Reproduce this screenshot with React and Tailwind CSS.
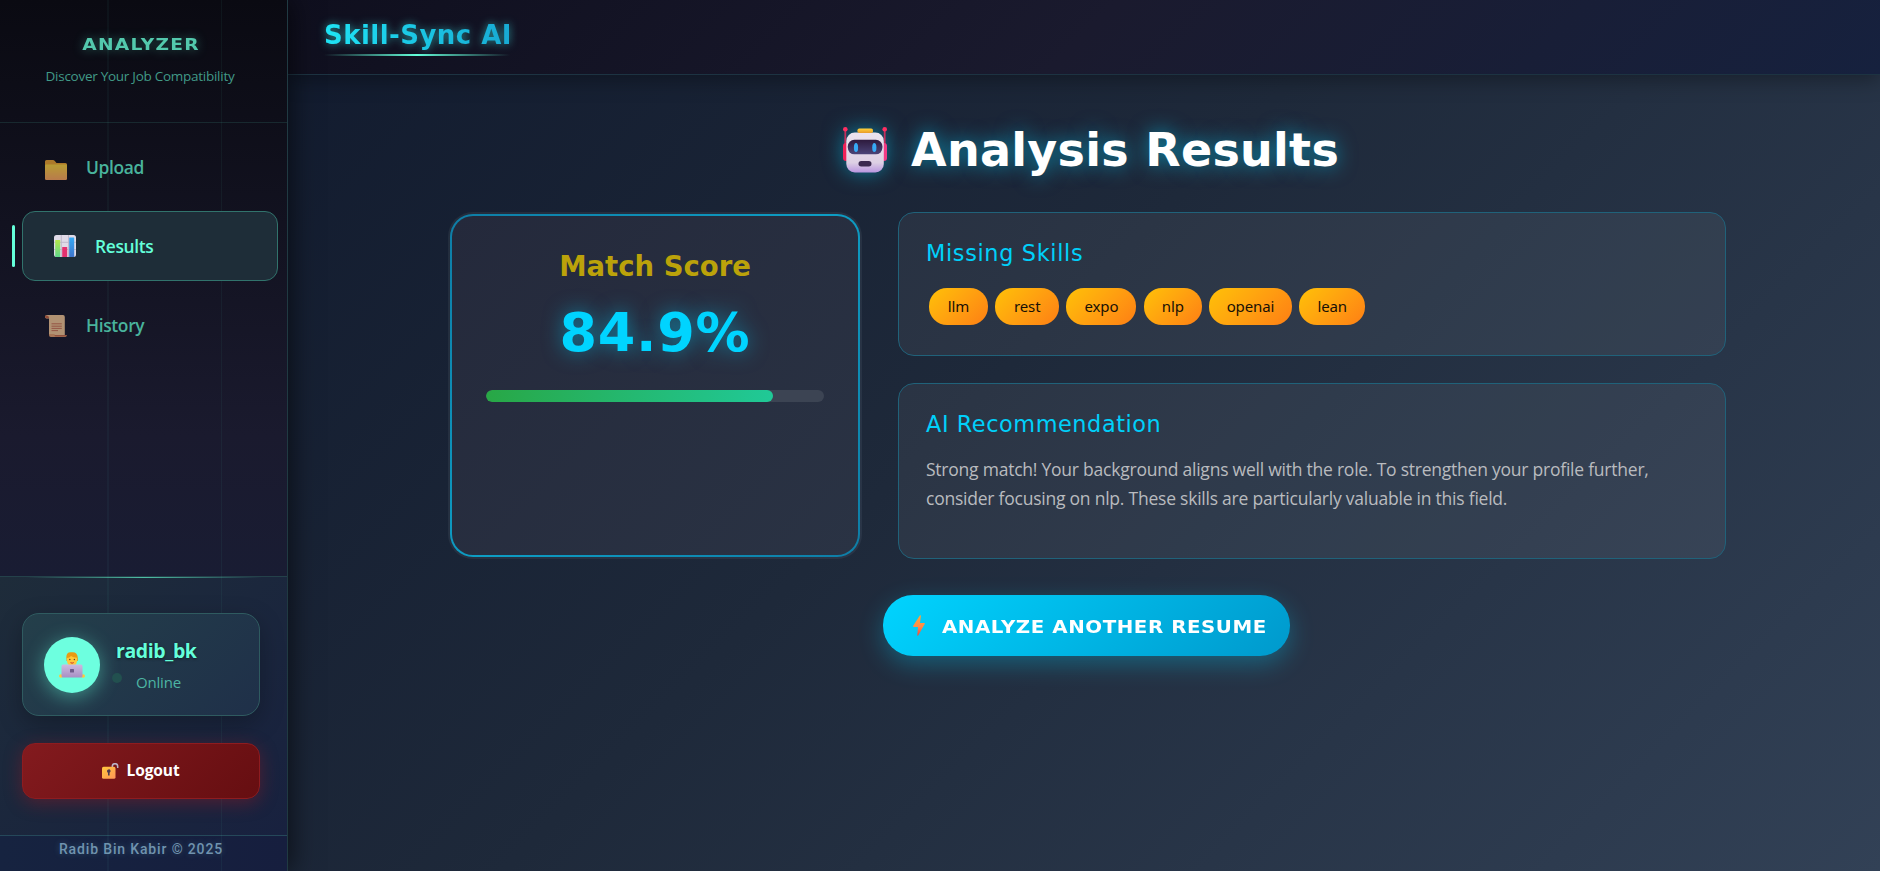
const Folder = () => (
  <svg viewBox="0 0 22 20" className="h-5 w-[22px] shrink-0 opacity-70">
    <defs>
      <linearGradient id="fold" x1="0" y1="0" x2="0" y2="1">
        <stop offset="0" stopColor="#ffd83e" />
        <stop offset="1" stopColor="#ffa860" />
      </linearGradient>
    </defs>
    <path d="M0 1.500Q0 0 1.500 0H8q1 0 1.600.8L11.500 3H20.500Q22 3 22 4.500V10H0z" fill="#f0a630" />
    <rect y="4.500" width="22" height="15.500" rx="1.200" fill="url(#fold)" />
  </svg>
);

const Chart = () => (
  <svg viewBox="0 0 22 22" className="size-[22px] shrink-0">
    <defs>
      <linearGradient id="barA" x1="0" y1="0" x2="0" y2="1">
        <stop offset="0" stopColor="#b4e84a" />
        <stop offset="1" stopColor="#5fd78a" />
      </linearGradient>
      <linearGradient id="barB" x1="0" y1="0" x2="0" y2="1">
        <stop offset="0" stopColor="#35a9f5" />
        <stop offset="1" stopColor="#3f75cc" />
      </linearGradient>
    </defs>
    <rect width="22" height="22" rx="2.500" fill="#e0dbe8" />
    <path d="M7.300 0v22M14.500 0v22M0 7.300h22M0 14.500h22" stroke="#bdb5ca" strokeWidth=".9" />
    <rect x="1.200" y="5" width="5" height="17" rx=".5" fill="url(#barA)" />
    <rect x="8.200" y="12" width="5" height="10" rx=".5" fill="#e5316f" />
    <rect x="15.200" y="2.500" width="5" height="19.500" rx=".5" fill="url(#barB)" />
  </svg>
);

const Scroll = () => (
  <svg viewBox="0 0 22 22" className="size-[22px] shrink-0 opacity-70">
    <path d="M0 1.800Q0 0 2 0H18q1.800 0 1.800 2v18H4V3.500H1.500Q0 3.500 0 1.800z" fill="#f3c794" />
    <path d="M0 1.800Q0 .6 1.500.6q2.500 0 2.500 2.600H1.300Q0 3.200 0 1.800z" fill="#c9633f" />
    <path d="M4 19h5.500q0 1.200 1 1.200H22Q21.500 22 20 22H5.800Q4 22 4 20z" fill="#e8a06c" />
    <path d="M9.500 20h12.300q-.4 1.500-1.800 1.500H10.500q-1-.3-1-1.500z" fill="#c56a48" />
    <path d="M6.500 8.800h10.300M6.500 11.200h10.300M6.500 13.400h10.300M6.500 15.600h6.500" stroke="#c5654a" strokeWidth=".9" />
  </svg>
);

const Technologist = () => (
  <svg viewBox="0 0 26 26" className="size-[26px]">
    <defs>
      <linearGradient id="lap" x1="0" y1="0" x2="0" y2="1">
        <stop offset="0" stopColor="#cdbbe0" />
        <stop offset="1" stopColor="#a88ec4" />
      </linearGradient>
    </defs>
    <path d="M7.500 7Q6.500 0 12 .3 18.500-.8 18.800 6v3H7.500z" fill="#e99a12" />
    <path d="M8 6q2.500 0 4-2 2 1.800 6 1.800V9q-.3 5-5 5t-5-5z" fill="#ffc83a" />
    <circle cx="10.800" cy="7.400" r=".75" fill="#59402f" />
    <circle cx="15.400" cy="7.400" r=".75" fill="#59402f" />
    <path d="M11.500 10.600q1.600 1.200 3.200 0" stroke="#c8322f" strokeWidth="1" fill="none" />
    <ellipse cx="2" cy="24" rx="2" ry="1.700" fill="#ffc83a" />
    <ellipse cx="24" cy="24" rx="2" ry="1.700" fill="#ffc83a" />
    <rect x="2.500" y="12.500" width="21" height="13" rx="1.500" fill="url(#lap)" />
    <rect x="11" y="17" width="4" height="3.500" rx=".6" fill="#6f5b8b" />
  </svg>
);

const OpenLock = () => (
  <svg viewBox="0 0 17 16" className="h-4 w-[17px]">
    <defs>
      <linearGradient id="lock" x1="0" y1="0" x2="1" y2="1">
        <stop offset="0" stopColor="#ffc83d" />
        <stop offset="1" stopColor="#ff9558" />
      </linearGradient>
    </defs>
    <path d="M10.300 5V3.400a2.700 2.700 0 0 1 5.400 0V5" fill="none" stroke="#b9b3c8" strokeWidth="1.500" />
    <rect y="3.800" width="13.500" height="12" rx="1.600" fill="url(#lock)" />
    <path d="M5 8.300a1.800 1.800 0 1 1 2.600 1.500V12.500H6V9.800A1.800 1.800 0 0 1 5 8.300z" fill="#4c3a50" />
  </svg>
);

const Robot = () => (
  <svg
    viewBox="0 0 44 46"
    className="h-[46px] w-11 shrink-0 overflow-visible drop-shadow-[0_0_10px_rgba(0,212,255,0.5)]"
  >
    <defs>
      <linearGradient id="head" x1="0" y1="0" x2="0" y2="1">
        <stop offset="0" stopColor="#ece4ef" />
        <stop offset=".75" stopColor="#ddd0e4" />
        <stop offset="1" stopColor="#b995e0" />
      </linearGradient>
      <linearGradient id="visor" x1="0" y1="0" x2="0" y2="1">
        <stop offset="0" stopColor="#2d1a3d" />
        <stop offset="1" stopColor="#4b4478" />
      </linearGradient>
      <linearGradient id="hat" x1="0" y1="0" x2="0" y2="1">
        <stop offset="0" stopColor="#ffd23a" />
        <stop offset="1" stopColor="#e89a2a" />
      </linearGradient>
    </defs>
    <path d="M2.300 2v18M41.700 2v18" stroke="#c52d5c" strokeWidth="1.800" />
    <circle cx="2.300" cy="2.300" r="2.300" fill="#ff2f62" />
    <circle cx="41.700" cy="2.300" r="2.300" fill="#ff2f62" />
    <rect x="0" y="16" width="7" height="18" rx="3" fill="#ef2158" />
    <rect x="37" y="16" width="7" height="18" rx="3" fill="#f23b86" />
    <rect x="3.300" y="5.600" width="37.500" height="40" rx="8.500" fill="url(#head)" />
    <rect x="14.500" y="1.500" width="15.500" height="4.600" rx="1.800" fill="url(#hat)" />
    <rect x="4.800" y="12.800" width="34.600" height="14.500" rx="6.500" fill="url(#visor)" />
    <ellipse cx="13" cy="20.500" rx="2.100" ry="4.600" fill="#36a9f4" />
    <ellipse cx="31.300" cy="20.500" rx="2.100" ry="4.600" fill="#36a9f4" />
    <rect x="15.500" y="34" width="13" height="5.500" rx="2.700" fill="#3b2a4f" />
  </svg>
);

const Bolt = () => (
  <svg viewBox="0 0 12 21" className="h-[21px] w-3 shrink-0">
    <defs>
      <linearGradient id="bolt" x1="0" y1="0" x2="0" y2="1">
        <stop offset="0" stopColor="#ffa53a" />
        <stop offset=".55" stopColor="#ff8c48" />
        <stop offset="1" stopColor="#f2453f" />
      </linearGradient>
    </defs>
    <path d="M7 0.300Q8 0 7.900 1L7 8H11.300Q12.300 8.200 11.700 9L5.200 20.500Q4.300 21.200 4.300 20L5 12H.8Q-.3 11.800.2 10.800z" fill="url(#bolt)" />
  </svg>
);

const skills = [
  ["llm", "w-[59px]"],
  ["rest", "w-16"],
  ["expo", "w-[70px]"],
  ["nlp", "w-[58.5px]"],
  ["openai", "w-[82.5px]"],
  ["lean", "w-[66.5px]"],
];

function Sidebar() {
  return (
    <aside className="relative z-20 flex w-72 shrink-0 flex-col border-r border-[#203a42] bg-linear-to-b from-[#0a0a12] via-[#1a1a2e] to-[#16213e] font-['Open_Sans',sans-serif] shadow-[4px_0_24px_rgba(0,0,0,0.55)]">
      <div className="flex h-[123px] flex-col items-center border-b border-[#18292f] pr-[7px]">
        <h2 className="mt-[32px] ml-[2px] scale-x-[1.13] font-['DejaVu_Sans',sans-serif] text-[16.500px] leading-[26px] font-bold tracking-[1.100px] text-[#53c9ad] [text-shadow:0_0_10px_rgba(100,255,218,0.35)]">
          ANALYZER
        </h2>
        <p className="mt-[7px] text-[13.500px] leading-[22px] tracking-[-0.270px] text-[#419a87]">
          Discover Your Job Compatibility
        </p>
      </div>

      <nav className="flex flex-1 flex-col text-[17.400px] font-semibold tracking-[-0.350px] text-[#49b39c]">
        <a className="mt-[10px] flex h-[70px] items-center gap-[19px] pl-[45px]">
          <span className="pt-1"><Folder /></span>
          <span className="pb-[2px]">Upload</span>
        </a>
        <a className="relative z-10 mt-2 ml-[22px] flex h-[70px] w-64 items-center gap-[19px] rounded-[13px] border border-[#31736c] bg-[#1e2d38] pl-[31px] text-[#64ffda]">
          <i className="absolute top-[13px] -left-[11px] h-[42px] w-[3px] rounded-xs bg-[#64ffda]" />
          <Chart />
          <span>Results</span>
        </a>
        <a className="mt-2 flex h-[70px] items-center gap-[19px] pl-[45px]">
          <span className="pt-1"><Scroll /></span>
          <span className="pt-[2px]">History</span>
        </a>
      </nav>

      <div className="h-[259px] border-t border-[#24414a] bg-linear-to-br from-[#1e2c3a] to-[#18213f] px-[22px]">
        <div className="ml-1 h-px w-[236px] bg-linear-to-r from-transparent via-[#4fc0a6] to-transparent" />
        <div className="relative z-10 mt-[35px] flex h-[103px] w-[238px] items-center rounded-[17px] border border-[#2f5b60] bg-linear-135 from-[#243f4a] to-[#1f3049] pl-[21px] shadow-[0_8px_24px_rgba(0,0,0,0.25)]">
          <div className="flex size-14 items-center justify-center rounded-full bg-[#6dffdf] shadow-[0_4px_20px_rgba(100,255,218,0.45)]">
            <Technologist />
          </div>
          <div className="ml-4 flex flex-col pt-[2px]">
            <span className="text-[19.500px] leading-7 font-bold tracking-[-0.400px] text-[#64ffda] [text-shadow:0_1px_3px_rgba(0,0,0,0.5)]">
              radib_bk
            </span>
            <span className="relative mt-[5px] pl-[20px] text-[15px] leading-6 tracking-[-0.200px] text-[#4db5a3]">
              <i className="absolute top-[3px] -left-[4px] size-[10px] rounded-full bg-[#22504f]" />
              Online
            </span>
          </div>
        </div>
        <button className="relative z-10 mt-[27px] flex h-14 w-[238px] items-center justify-center gap-[7px] rounded-[13px] border border-[#8e1c20] bg-linear-135 from-[#831a1e] to-[#660e11] text-[15.500px] font-bold tracking-[-0.100px] text-white shadow-[0_4px_18px_rgba(150,25,35,0.45)]">
          <OpenLock />
          <span>Logout</span>
        </button>
      </div>
      <footer className="h-9 border-t border-[#25485a] bg-linear-to-r from-[#162340] to-[#161e3e] pr-[5px] text-center font-[Roboto,sans-serif] text-sm leading-[26px] font-medium tracking-[0.850px] text-[#7093ae] [text-shadow:0_0_6px_rgba(100,180,220,0.3)]">
        Radib Bin Kabir © 2025
      </footer>
      <i className="pointer-events-none absolute inset-y-0 left-[107px] w-[2px] bg-[#64ffda]/4" />
      <i className="pointer-events-none absolute inset-y-0 left-[221px] w-px bg-[#64ffda]/5" />
    </aside>
  );
}

export default function App() {
  return (
    <div className="flex h-[871px] w-[1880px] overflow-hidden bg-linear-135 from-slate-900 via-[#1e293a] to-[#324156]">
      <Sidebar />
      <div className="flex flex-1 flex-col">
        <header className="relative z-10 h-[75px] border-b border-[#1d3342] bg-linear-135 from-[#0f0f1e] via-[#1a1a2e] to-[#16213e] pl-9 shadow-[0_4px_20px_rgba(0,0,0,0.35)]">
          <div className="w-[188px] pt-[17px]">
            <h1 className="bg-linear-to-r from-[#1fe4f5] to-[#18a9d2] bg-clip-text font-['DejaVu_Sans',sans-serif] text-[26px] leading-9 font-bold tracking-[0.450px] whitespace-nowrap text-transparent drop-shadow-[0_0_4px_rgba(60,225,225,0.6)]">
              Skill-Sync AI
            </h1>
            <div className="mt-px h-[2px] w-[186px] bg-linear-to-r from-transparent via-[#64ffda] to-transparent" />
          </div>
        </header>

        <main className="flex flex-col">
          <div className="mt-[44px] ml-[555px] flex h-[62px] items-center gap-6">
            <Robot />
            <h2 className="font-['DejaVu_Sans',sans-serif] text-[46px] leading-[62px] font-bold tracking-[0.280px] whitespace-nowrap text-white [text-shadow:0_0_20px_rgba(0,212,255,0.6)]">
              Analysis Results
            </h2>
          </div>

          <div className="mt-[31px] ml-[160px] flex gap-9">
            <section className="h-[347px] w-[414px] rounded-[25px] bg-linear-135 from-[#232d3d] to-[#2a3547] p-[2px]">
              <div className="h-[343px] rounded-[23px] bg-linear-135 from-[#0e7da6] via-[#0d9dc4] to-[#0e7da6] p-[2px]">
                <div className="flex h-[339px] flex-col items-center rounded-[21px] bg-linear-135 from-[#24293b] to-[#2a3344] px-[34px]">
                  <h3 className="mt-[32px] font-['DejaVu_Sans',sans-serif] text-[27.500px] leading-9 font-bold whitespace-nowrap text-[#bba20a]">
                    Match Score
                  </h3>
                  <strong className="mt-[18px] font-['DejaVu_Sans',sans-serif] text-[54px] leading-[62px] font-bold tracking-[0.700px] text-[#00d4ff] [text-shadow:0_0_20px_rgba(0,212,255,0.5)]">
                    84.9%
                  </strong>
                  <div className="mt-[26px] h-3 w-[338px] overflow-hidden rounded-full bg-[#3c4453]">
                    <div className="h-3 w-[84.900%] rounded-full bg-linear-to-r from-[#28a745] to-[#20c997]" />
                  </div>
                </div>
              </div>
            </section>

            <div className="flex w-[828px] flex-col gap-[27px]">
              <section className="h-36 rounded-2xl border border-[#20627a] bg-white/6 pl-[27px]">
                <h3 className="mt-[24px] font-['DejaVu_Sans',sans-serif] text-[22.400px] leading-8 tracking-[0.650px] text-[#00d0fa]">
                  Missing Skills
                </h3>
                <div className="mt-[19px] ml-[3px] flex gap-[7.200px]">
                  {skills.map(([name, width]) => (
                    <span
                      key={name}
                      className={
                        width +
                        " flex h-[37px] shrink-0 items-center justify-center rounded-[18px] bg-linear-135 from-[#ffc107] to-[#fd7e14] font-['Noto_Sans',sans-serif] text-[15px] tracking-[-0.100px] text-[#171006]"
                      }
                    >
                      {name}
                    </span>
                  ))}
                </div>
              </section>

              <section className="h-44 rounded-2xl border border-[#20627a] bg-white/6 pl-[27px]">
                <h3 className="mt-[24px] font-['DejaVu_Sans',sans-serif] text-[22.400px] leading-8 tracking-[0.560px] text-[#00d0fa]">
                  AI Recommendation
                </h3>
                <p className="mt-[15px] font-['Open_Sans',sans-serif] text-[17.500px] leading-[29px] tracking-[-0.230px] whitespace-nowrap text-[#b9bbbf]">
                  Strong match! Your background aligns well with the role. To strengthen your profile further,
                  <br />
                  consider focusing on nlp. These skills are particularly valuable in this field.
                </p>
              </section>
            </div>
          </div>

          <button className="mt-9 ml-[595px] flex h-[61px] w-[407px] items-center gap-[17px] rounded-[30px] bg-linear-135 from-[#00d4ff] to-[#0099cc] pl-[30px] font-['DejaVu_Sans',sans-serif] text-[18px] font-bold tracking-[0.500px] whitespace-nowrap text-white shadow-[0_8px_25px_rgba(0,212,255,0.3)]">
            <Bolt />
            <span className="origin-left scale-x-[1.1] pt-px">ANALYZE ANOTHER RESUME</span>
          </button>
        </main>
      </div>
    </div>
  );
}
